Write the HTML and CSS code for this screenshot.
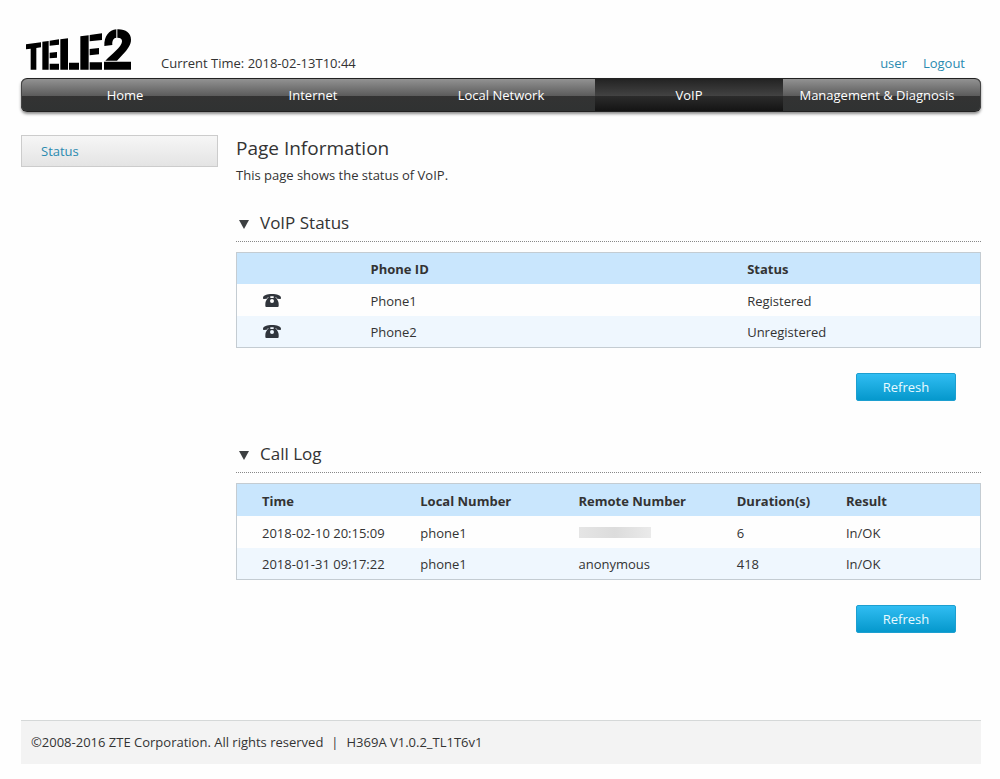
FILE: index.html
```html
<!DOCTYPE html>
<html lang="en">
<head>
<meta charset="utf-8">
<title>VoIP Status</title>
<link rel="stylesheet" href="styles.css">
</head>
<body>
<svg class="defs" aria-hidden="true">
  <symbol id="phone" viewBox="0 0 54 39">
    <path fill="#30353c" fill-rule="evenodd" d="M0 11C1 4 12 0 27 0s26 4 27 11c0 3-1 4-3 4l-8-1c-2 0-3-1-3-4l-2-1v2c5 5 9 11 9 18v7c0 2-1 3-3 3H10c-2 0-3-1-3-3v-7c0-7 4-13 9-18V9l-2 1c0 3-1 4-3 4l-8 1c-2 0-3-1-3-4zM22 7v5h10V7zM27 15a6 6 0 1 0 0 12 6 6 0 0 0 0-12z"/>
  </symbol>
</svg>
<div class="page">
  <header class="header">
    <svg class="logo" viewBox="0 0 318 123" role="img" aria-label="TELE2">
      <path d="M0 46L45 40V55L31 57V122H14V59L0 61zM49 38L68 36V122H49zM71 35L99 31V47L71 50zM71 71L93 69V86L71 88zM71 104H99V122H71zM103 31L126 28V122H103zM129 101H159V122H129zM163 22L188 19V122H163zM191 18L228 13V33L191 37zM191 60L219 57V76L191 79zM191 100H228V122H191zM235 51C234 22 249 3 271 1V26C263 27 258 33 259 48zM274 1C298 0 315 12 315 32C315 48 305 60 291 76L273 95H238C259 73 286 54 288 38C289 30 284 26 274 26zM234 98H315V122H234z"/>
    </svg>
    <span class="clock">Current Time: 2018-02-13T10:44</span>
    <div class="account"><a href="#">user</a><a href="#">Logout</a></div>
  </header>
  <nav class="nav">
    <a href="#">Home</a>
    <a href="#">Internet</a>
    <a href="#">Local Network</a>
    <a href="#" class="active">VoIP</a>
    <a href="#">Management &amp; Diagnosis</a>
  </nav>
  <div class="columns">
    <aside class="sidebar"><a href="#">Status</a></aside>
    <main class="content">
      <h1>Page Information</h1>
      <p class="intro">This page shows the status of VoIP.</p>
      <section class="section">
        <h2><svg class="arrow" viewBox="0 0 10 9"><path d="M0 0h10L5 9z"/></svg>VoIP Status</h2>
        <table class="grid phones">
          <colgroup><col class="c-icon"><col class="c-phone"><col></colgroup>
          <thead><tr><td></td><th>Phone ID</th><th>Status</th></tr></thead>
          <tbody>
            <tr><td><svg class="phone"><use href="#phone"/></svg></td><td>Phone1</td><td>Registered</td></tr>
            <tr><td><svg class="phone"><use href="#phone"/></svg></td><td>Phone2</td><td>Unregistered</td></tr>
          </tbody>
        </table>
        <div class="actions"><button type="button">Refresh</button></div>
      </section>
      <section class="section">
        <h2><svg class="arrow" viewBox="0 0 10 9"><path d="M0 0h10L5 9z"/></svg>Call Log</h2>
        <table class="grid calls">
          <colgroup><col class="c-wide"><col class="c-wide"><col class="c-wide"><col class="c-mid"><col></colgroup>
          <thead><tr><th>Time</th><th>Local Number</th><th>Remote Number</th><th>Duration(s)</th><th>Result</th></tr></thead>
          <tbody>
            <tr><td>2018-02-10 20:15:09</td><td>phone1</td><td><span class="redacted"></span></td><td>6</td><td>In/OK</td></tr>
            <tr><td>2018-01-31 09:17:22</td><td>phone1</td><td>anonymous</td><td>418</td><td>In/OK</td></tr>
          </tbody>
        </table>
        <div class="actions"><button type="button">Refresh</button></div>
      </section>
    </main>
  </div>
  <footer class="footer"><span>©2008-2016 ZTE Corporation. All rights reserved</span><span>|</span><span>H369A V1.0.2_TL1T6v1</span></footer>
</div>
</body>
</html>
```

FILE: styles.css
```css
* { box-sizing: border-box; }
body {
  margin: 0;
  background: #fefefe;
  color: #333;
  font: 13px/20px "Open Sans", "Noto Sans", sans-serif;
}
a { color: #2a8ab0; text-decoration: none; }
.defs { position: absolute; width: 0; height: 0; }
.page { padding: 0 19px 15px 21px; }
.header {
  display: flex;
  align-items: flex-end;
  height: 78px;
  padding: 0 16px 5px 5px;
}
.logo { width: 106px; height: 41px; margin-bottom: 3px; }
.clock { margin-left: 29px; }
.account { display: flex; gap: 16px; margin-left: auto; }
.nav {
  display: flex;
  height: 34px;
  padding: 0 10px;
  border: 1px solid #222;
  border-width: 1px 0;
  border-radius: 6px;
  background: linear-gradient(#929292, #5c5c5c 52%, #333 52%, #303232);
  box-shadow: inset 1px 0 #444, inset -1px 0 #444, 0 2px 3px rgba(0, 0, 0, .45);
}
.nav a {
  flex: 1 1 0;
  color: #fff;
  line-height: 33px;
  text-align: center;
  white-space: nowrap;
}
.nav .active { background: linear-gradient(#232323, #424242 52%, #2b2b2b 54%, #141414); }
.columns { display: flex; gap: 18px; padding-top: 23px; }
.sidebar { flex: none; width: 197px; }
.sidebar a {
  display: block;
  padding: 5px 19px;
  height: 32px;
  border: 1px solid #ccc;
  background: linear-gradient(#f6f6f6, #e4e4e4);
}
.content { flex: 1; min-width: 0; }
h1 { margin: 0; font-size: 19px; line-height: 26px; font-weight: 400; }
.intro { margin: 4px 0 20px; }
h2 {
  display: flex;
  align-items: center;
  margin: 0 0 10px;
  height: 37px;
  padding: 0 3px;
  border-bottom: 1px dotted #888;
  font-size: 17px;
  font-weight: 400;
}
.arrow { width: 10px; height: 9px; margin: 2px 11px 0 0; fill: #3c3f41; }
.grid {
  width: 100%;
  table-layout: fixed;
  border-collapse: separate;
  border-spacing: 0;
  border: 1px solid #c4ccd2;
}
.grid th, .grid td { height: 31px; padding: 0 0 0 25px; text-align: left; }
.grid tbody tr:first-child td, .calls th { height: 32px; padding-top: 1px; }
.grid thead { background: #c9e6fd; }
.grid tbody tr { background: #fefefe; }
.grid tbody tr:nth-child(2) { background: #eff7fe; }
.c-icon { width: 14.6%; }
.c-phone { width: 50.7%; }
.c-wide { width: 21.3%; }
.c-mid { width: 14.7%; }
.phone { display: block; width: 20px; height: 13px; }
.redacted { display: block; width: 72px; height: 11px; background: linear-gradient(90deg, #e5e5e5, #dcdcdc 50%, #eaeaea); }
.actions { display: flex; justify-content: flex-end; padding: 25px 25px 35px 0; }
button {
  width: 100px;
  height: 28px;
  padding: 0;
  border: 1px solid #1c9fd0;
  border-radius: 2px;
  background: linear-gradient(#30bdf2, #0598cc);
  color: #e9faff;
  font: inherit;
}
.footer {
  display: flex;
  gap: 8px;
  margin-top: 52px;
  padding: 11px 10px 12px;
  border-top: 1px solid #d5d8d8;
  background: #f3f3f3;
}
```
